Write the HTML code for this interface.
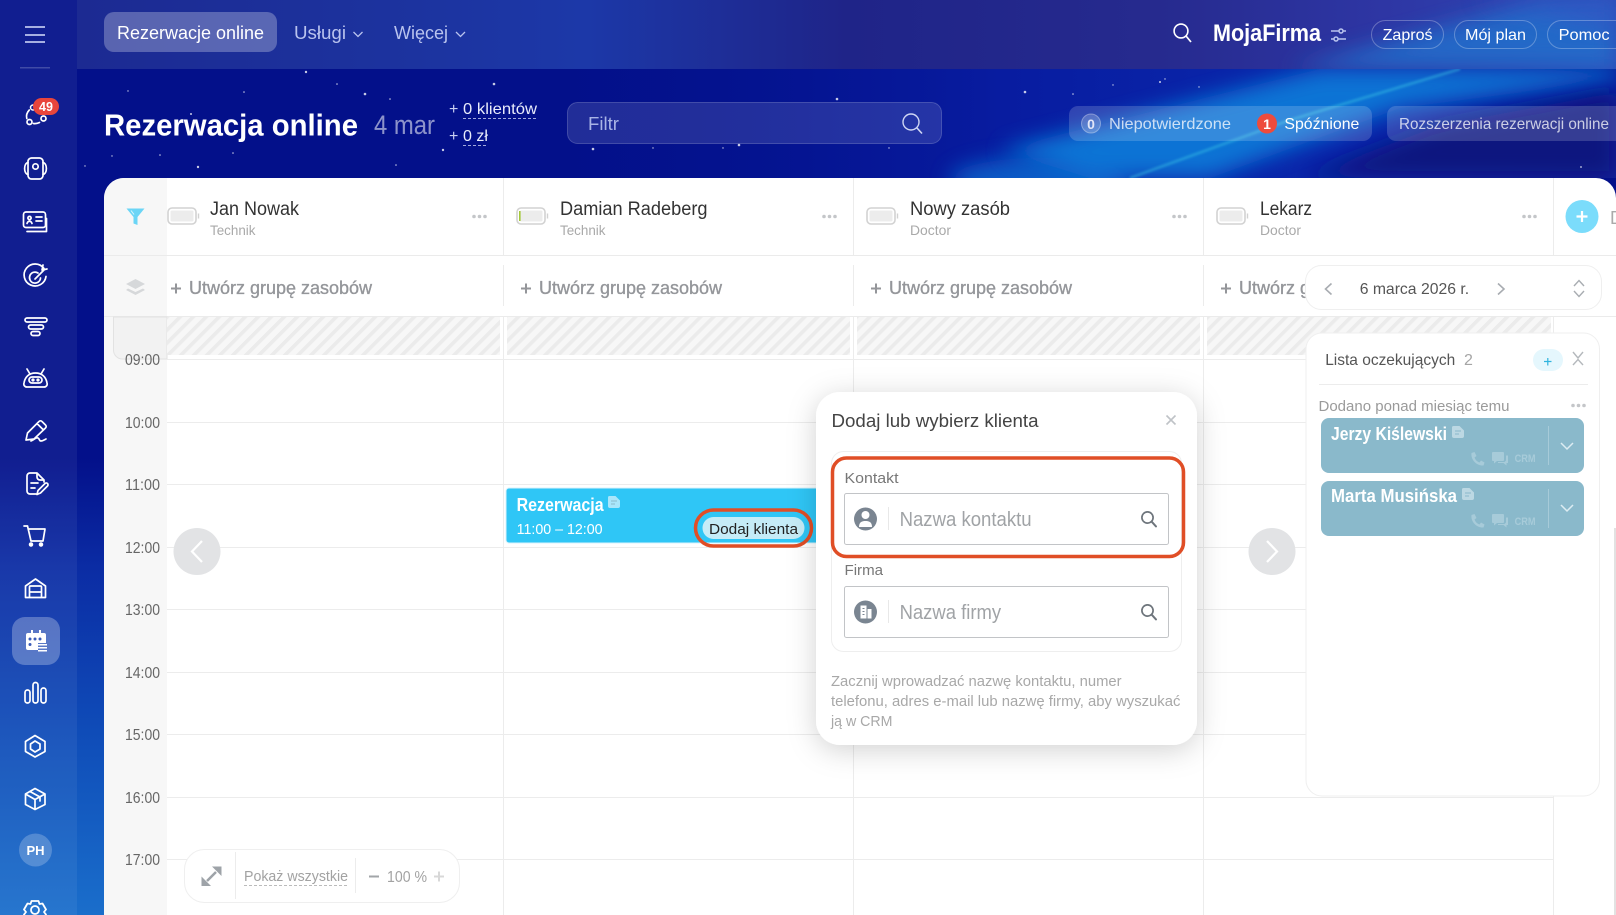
<!DOCTYPE html>
<html lang="pl"><head><meta charset="utf-8"><title>Rezerwacja online</title>
<style>html,body{margin:0;padding:0;background:#fff;overflow:hidden;width:1616px;height:915px}svg{display:block}text{font-family:"Liberation Sans",sans-serif;white-space:pre}</style></head>
<body>
<svg xmlns="http://www.w3.org/2000/svg" width="1616" height="915" viewBox="0 0 1616 915">
<defs>
<linearGradient id="base" x1="0" y1="0" x2="0" y2="1"><stop offset="0" stop-color="#03108a"/><stop offset=".5" stop-color="#03108a"/><stop offset=".62" stop-color="#0b2ca4"/><stop offset=".8" stop-color="#0f4cb8"/><stop offset="1" stop-color="#1a6ecb"/></linearGradient>
<linearGradient id="hz" x1="0" y1="0" x2="1" y2="0"><stop offset="0" stop-color="#03108a" stop-opacity="0"/><stop offset=".45" stop-color="#081ca0"/><stop offset=".75" stop-color="#0a28ac"/><stop offset="1" stop-color="#0a1e9c"/></linearGradient>
<linearGradient id="hdr" x1="0" y1="0" x2="1" y2="0"><stop offset="0" stop-color="#1c2a92"/><stop offset=".22" stop-color="#1c339f"/><stop offset=".33" stop-color="#1c38a8"/><stop offset=".5" stop-color="#1f2488"/><stop offset=".7" stop-color="#262a8e"/><stop offset=".85" stop-color="#2e36a4"/><stop offset="1" stop-color="#2f4ab8"/></linearGradient>
<filter id="b30" x="-30%" y="-100%" width="160%" height="300%"><feGaussianBlur stdDeviation="22"/></filter>
<filter id="b12" x="-20%" y="-50%" width="140%" height="200%"><feGaussianBlur stdDeviation="11"/></filter>
<filter id="b4" x="-10%" y="-30%" width="120%" height="160%"><feGaussianBlur stdDeviation="1.200"/></filter>
<filter id="sh" x="-20%" y="-20%" width="140%" height="140%"><feDropShadow dx="0" dy="5" stdDeviation="14" flood-color="#000" flood-opacity=".18"/></filter>
<clipPath id="bgclip"><rect x="77" y="69" width="1539" height="109"/></clipPath>
<clipPath id="hdclip"><rect x="77" y="0" width="1539" height="69"/></clipPath>
<clipPath id="card"><path d="M124 178H1596a20 20 0 0 1 20 20V915H104V198a20 20 0 0 1 20-20Z"/></clipPath>
<pattern id="hatch" width="9.200" height="9.200" patternUnits="userSpaceOnUse" patternTransform="rotate(45)"><rect width="9.200" height="9.200" fill="#f7f7f7"/><rect width="3.600" height="9.200" fill="#ebebeb"/></pattern>
<symbol id="bat" viewBox="0 0 34 18" width="34" height="18"><rect x="1" y="1" width="28" height="16" rx="4" fill="#fff" stroke="#d2d2d2" stroke-width="1.600"/><rect x="3.500" y="3.500" width="23" height="11" rx="1.500" fill="#ececec"/><path d="M31.500 6.500v5" stroke="#d2d2d2" stroke-width="1.400"/></symbol>
<symbol id="dots" viewBox="0 0 15 5" width="15" height="5"><circle cx="2" cy="2.500" r="1.800" fill="#c4c6c9"/><circle cx="7.500" cy="2.500" r="1.800" fill="#c4c6c9"/><circle cx="13" cy="2.500" r="1.800" fill="#c4c6c9"/></symbol>
<symbol id="mag" viewBox="0 0 18 18" width="18" height="18"><circle cx="7.500" cy="7.500" r="5.600" fill="none" stroke="#6e757c" stroke-width="1.700"/><path d="M11.600 11.600 16 16.400" stroke="#6e757c" stroke-width="2" stroke-linecap="round"/></symbol>
<symbol id="note" viewBox="0 0 12 12" width="12" height="12"><path d="M1.500 0h6L12 4.500V10a2 2 0 0 1-2 2H2a2 2 0 0 1-2-2V1.500A1.500 1.500 0 0 1 1.500 0Z" fill="currentColor"/><path d="M3 5h6M3 8h4" stroke="#8ab9cb" stroke-width="1"/></symbol>
<symbol id="phone" viewBox="0 0 48 14" width="48" height="14"><path d="M1.500 1 4.500 0 6.500 4 4.500 5.500C5.500 8 7 9.500 9.500 10.500L11 8.500 14.500 10.500 13.500 13.500C7 14 0.500 8 1.500 1Z" fill="#a7cbd9"/><path d="M23 0H33a1 1 0 0 1 1 1V8a1 1 0 0 1-1 1H27L24 11.500V9H23A1 1 0 0 1 22 8V1A1 1 0 0 1 23 0Z" fill="#a7cbd9"/><path d="M36 3.500H38V11H36.500V13.500L33.500 11H28V10H34.500L36 8.500Z" fill="#a7cbd9"/></symbol>
</defs>

<!-- background -->
<rect width="1616" height="915" fill="url(#base)"/>
<g clip-path="url(#bgclip)">
<rect x="500" y="69" width="1116" height="109" fill="url(#hz)"/>
<ellipse cx="1040" cy="180" rx="90" ry="22" fill="#0f6cd0" opacity=".8" filter="url(#b12)"/>
<path d="M1000 150 1320 69H1616V80L1400 108 1210 178H1090Z" fill="#1078d8" opacity=".95" filter="url(#b12)"/>
<path d="M1300 178 1440 125 1616 92V178Z" fill="#07187f" filter="url(#b12)"/>
<path d="M1130 178 1290 120 1460 69" stroke="#3fd0e8" stroke-width="2" fill="none" opacity=".55" filter="url(#b4)"/>
<g fill="#ffffff" opacity=".78">
<circle cx="306" cy="72" r="1.200"/><circle cx="365" cy="94" r="1.300"/><circle cx="390" cy="99" r=".8"/><circle cx="494" cy="84" r="1.300"/><circle cx="244" cy="92" r=".8"/><circle cx="191" cy="114" r="1"/><circle cx="160" cy="155" r=".8"/><circle cx="198" cy="167" r="1.200"/><circle cx="233" cy="153" r=".8"/><circle cx="443" cy="150" r="1.200"/><circle cx="396" cy="165" r=".8"/><circle cx="337" cy="84" r=".8"/><circle cx="112" cy="156" r=".7"/><circle cx="85" cy="166" r=".7"/><circle cx="128" cy="91" r=".7"/><circle cx="837" cy="99" r="1.300"/><circle cx="1025" cy="92" r="1.300"/><circle cx="1073" cy="94" r=".8"/><circle cx="593" cy="149" r="1.300"/><circle cx="739" cy="145" r="1.300"/><circle cx="653" cy="148" r=".7"/><circle cx="723" cy="148" r=".7"/><circle cx="889" cy="148" r=".7"/><circle cx="1160" cy="82" r="1"/><circle cx="1165" cy="79" r=".7"/><circle cx="1199" cy="87" r=".7"/><circle cx="1113" cy="85" r=".7"/><circle cx="1581" cy="167" r=".9"/></g>
</g>
<!-- sidebar & header overlays -->
<rect x="0" y="0" width="77" height="915" fill="#fff" opacity=".06"/>
<rect x="77" y="0" width="1539" height="69" fill="url(#hdr)"/>
<g clip-path="url(#hdclip)">
<path d="M1290 69 1540 0H1616V69Z" fill="#2470cc" opacity=".85" filter="url(#b12)"/>
<path d="M1470 0H1616V30L1530 10Z" fill="#3a48c0" opacity=".5" filter="url(#b12)"/>
</g>

<!-- top nav -->
<path d="M25 27h20M25 35h20M25 42h20" stroke="#bcc4ee" stroke-width="1.700" fill="none"/>
<rect x="20" y="67" width="30" height="1.500" fill="#fff" opacity=".2"/>
<rect x="104" y="12" width="173" height="40" rx="10" fill="#fff" opacity=".27"/>
<text x="117" y="39" font-size="18" fill="#fff" textLength="147" lengthAdjust="spacingAndGlyphs">Rezerwacje online</text>
<text x="294" y="39" font-size="18" fill="#b9c3ee" textLength="52" lengthAdjust="spacingAndGlyphs">Usługi</text>
<path d="M353.500 32l4.500 4.500 4.500-4.500" stroke="#b9c3ee" stroke-width="1.300" fill="none"/>
<text x="394" y="39" font-size="18" fill="#b9c3ee" textLength="54" lengthAdjust="spacingAndGlyphs">Więcej</text>
<path d="M456 32l4.500 4.500 4.500-4.500" stroke="#b9c3ee" stroke-width="1.300" fill="none"/>
<circle cx="1181" cy="31" r="6.900" fill="none" stroke="#fff" stroke-width="1.600"/><path d="M1186 36l5 6" stroke="#fff" stroke-width="1.700"/>
<text x="1213" y="41" font-size="24" font-weight="700" fill="#fff" textLength="108" lengthAdjust="spacingAndGlyphs">MojaFirma</text>
<g stroke="#b9c3ee" stroke-width="1.500" fill="none"><path d="M1331 31h15M1331 39h15"/><circle cx="1341" cy="31" r="2" fill="#2a3a9e"/><circle cx="1336" cy="39" r="2" fill="#2a3a9e"/></g>
<g fill="none" stroke="#fff" stroke-opacity=".28"><rect x="1371.500" y="20.500" width="72" height="28" rx="14"/><rect x="1454.500" y="20.500" width="82" height="28" rx="14"/><rect x="1547.500" y="20.500" width="92" height="28" rx="14"/></g>
<text x="1382.600" y="40" font-size="16" fill="#fff" textLength="50" lengthAdjust="spacingAndGlyphs">Zaproś</text>
<text x="1465" y="40" font-size="16" fill="#fff" textLength="61" lengthAdjust="spacingAndGlyphs">Mój plan</text>
<text x="1558.600" y="40" font-size="16" fill="#fff" textLength="51" lengthAdjust="spacingAndGlyphs">Pomoc</text>

<!-- page title -->
<text x="104" y="135.500" font-size="31" font-weight="700" fill="#fff" textLength="254" lengthAdjust="spacingAndGlyphs">Rezerwacja online</text>
<text x="374" y="134" font-size="27" fill="#fff" fill-opacity=".55" textLength="61" lengthAdjust="spacingAndGlyphs">4 mar</text>
<text x="449" y="114" font-size="16" fill="#c9cff2">+</text><text x="463" y="114" font-size="16" fill="#e9ecfb" textLength="74" lengthAdjust="spacingAndGlyphs">0 klientów</text>
<path d="M463 118.500h74" stroke="#c9cff2" stroke-dasharray="3 2" opacity=".8"/>
<text x="449" y="141" font-size="16" fill="#c9cff2">+</text><text x="463" y="141" font-size="16" fill="#e9ecfb" textLength="25" lengthAdjust="spacingAndGlyphs">0 zł</text>
<path d="M463 145.500h25" stroke="#c9cff2" stroke-dasharray="3 2" opacity=".8"/>
<rect x="567.500" y="102.500" width="374" height="41" rx="10" fill="#fff" fill-opacity=".12" stroke="#fff" stroke-opacity=".2"/>
<text x="588" y="130" font-size="18" fill="#a9b4e6" textLength="31" lengthAdjust="spacingAndGlyphs">Filtr</text>
<circle cx="911" cy="122" r="8" fill="none" stroke="#cfd6f4" stroke-width="1.400"/><path d="M917 128l5 5.500" stroke="#cfd6f4" stroke-width="1.600"/>
<rect x="1069" y="106" width="303" height="35" rx="9" fill="#fff" fill-opacity=".17"/>
<circle cx="1091" cy="123.500" r="9.500" fill="#fff" fill-opacity=".2" stroke="#fff" stroke-opacity=".35"/>
<text x="1091" y="129" font-size="14" font-weight="700" fill="#e2e6f8" text-anchor="middle">0</text>
<text x="1109" y="129" font-size="16" fill="#fff" fill-opacity=".75" textLength="122" lengthAdjust="spacingAndGlyphs">Niepotwierdzone</text>
<circle cx="1267" cy="123.500" r="10" fill="#ee4b3c"/>
<text x="1267" y="129" font-size="14" font-weight="700" fill="#fff" text-anchor="middle">1</text>
<text x="1284.400" y="129" font-size="16" fill="#fff" textLength="75" lengthAdjust="spacingAndGlyphs">Spóźnione</text>
<path d="M1396 106H1616V141H1396a9 9 0 0 1-9-9V115a9 9 0 0 1 9-9Z" fill="#fff" fill-opacity=".17"/>
<text x="1399" y="129" font-size="16" fill="#fff" fill-opacity=".75" textLength="210" lengthAdjust="spacingAndGlyphs">Rozszerzenia rezerwacji online</text>

<!-- sidebar icons -->
<g fill="none" stroke="#fff" stroke-width="1.700" stroke-linecap="round" stroke-linejoin="round">
<circle cx="29.500" cy="122" r="2.500"/><circle cx="43.500" cy="118.500" r="2.500"/><path d="M26.800 118.500c-.8-3 .2-6 2.500-8.500M33.500 123.500c2 .3 4 0 6-1"/><circle cx="33" cy="107.500" r="2.500" stroke-width="1.500"/>
<rect x="28" y="158" width="15" height="21" rx="3.500"/><circle cx="35.500" cy="166.500" r="2.700"/><path d="M28 162.500c-4.500 1-4.500 11 0 12M43 162.500c4.500 1 4.500 11 0 12"/>
<rect x="23.500" y="212" width="22" height="15.500" rx="2.500"/><path d="M27 231.500h19.500v-13"/><circle cx="29.500" cy="218" r="1.600"/><path d="M27 223.500c1-3 4-3 5 0M36 217h6M36 221h6"/>
<path d="M44 268.500a11 11 0 1 0 2 8M38 273a5.500 5.500 0 1 0 2.500 5M35 279 44 270M43 265l-1 5 5-1" />
<rect x="25" y="318" width="22" height="4" rx="2"/><rect x="28.500" y="325" width="15" height="4" rx="2"/><rect x="31" y="331.500" width="9" height="4" rx="2"/>
<path d="M27 387h17a3 3 0 0 0 3-4c-1-6-5-10-11.500-10s-10.500 4-11.500 10a3 3 0 0 0 3 4ZM30 374l-3-5M41 374l3-5"/><rect x="29" y="377" width="13" height="6" rx="3"/><circle cx="33" cy="380" r=".8" fill="#fff"/><circle cx="38" cy="380" r=".8" fill="#fff"/>
<path d="M26 440l1.500-7L39 421.500a2 2 0 0 1 3 0l3.500 3.500a2 2 0 0 1 0 3L34 439ZM37 423.500l6.500 6.500M31 441c3-1 5-4 7-3s1 3 3 3 3-1 5-2"/>
<path d="M36 494H30a3 3 0 0 1-3-3V476a3 3 0 0 1 3-3H37L44 480V482M37 473v4a3 3 0 0 0 3 3h4M31 483h7M31 488h4M37 494.500l1-4 7-7a1.500 1.500 0 0 1 2.500 2.500l-7 7Z"/>
<path d="M24 526h3.500l3.500 15H43l2-12H28.500"/><circle cx="31" cy="544.500" r="1.400" fill="#fff"/><circle cx="41" cy="544.500" r="1.400" fill="#fff"/>
<path d="M25.500 597.500V586l10-7 10 7v11.500ZM29.500 597.500V587a1 1 0 0 1 1-1h10a1 1 0 0 1 1 1v10.500M29.500 592h12"/>
</g>
<rect x="12" y="617" width="48" height="48" rx="13" fill="#fff" fill-opacity=".27"/>
<g fill="#fff"><path d="M28 633h3v-3h2v3h6v-3h2v3h3a2 2 0 0 1 2 2v8h-8v7H28a2 2 0 0 1-2-2V635a2 2 0 0 1 2-2Z"/><rect x="38" y="644" width="9" height="1.500"/><rect x="38" y="647" width="9" height="1.500"/><rect x="38" y="650" width="9" height="1.500"/></g>
<g fill="#3a5bb8"><circle cx="30" cy="639" r="1.500"/><circle cx="35" cy="639" r="1.500"/><circle cx="40" cy="639" r="1.500"/><circle cx="30" cy="644.500" r="1.500"/></g>
<g fill="none" stroke="#fff" stroke-width="1.700" stroke-linecap="round" stroke-linejoin="round">
<rect x="25" y="690" width="5" height="13" rx="2.500"/><rect x="33" y="682.500" width="5" height="20.500" rx="2.500"/><rect x="41" y="688" width="5" height="15" rx="2.500"/>
<path d="M35 735.500 45 741.500V751.500L35 757 25.500 751.500V741.500ZM35 741 40 744V749L35 752 30.500 749V744Z"/>
<path d="M35 788.500 45 794V804.500L35 809.500 25.500 804.500V794ZM25.500 794 35 799.500 45 794M35 799.500V809.500M30 791.500 40 797V801"/>
</g>
<circle cx="35.500" cy="850" r="16.500" fill="#fff" fill-opacity=".22"/>
<text x="35.500" y="855" font-size="13" font-weight="700" fill="#fff" text-anchor="middle">PH</text>
<g fill="none" stroke="#fff" stroke-width="1.800" stroke-linejoin="round"><circle cx="35" cy="910" r="4"/><path d="M31.500 901h7l1 3 3-.5 3.500 6-2 2.500 2 2.500-3.500 6-3-.5-1 3h-7l-1-3-3 .5-3.500-6 2-2.500-2-2.500 3.500-6 3 .5Z"/></g>
<!-- badge -->
<rect x="33" y="98" width="26" height="17" rx="8.500" fill="#e8453c"/>
<text x="46" y="111" font-size="12.500" font-weight="700" fill="#fff" text-anchor="middle">49</text>

<!-- main card -->
<g clip-path="url(#card)">
<rect x="104" y="178" width="1512" height="737" fill="#fff"/>
<rect x="104" y="178" width="63" height="737" fill="#f7f7f7"/>
<!-- row lines -->
<path d="M104 255.500H1616" stroke="#ebebeb"/>
<path d="M104 316.500H1616" stroke="#ebebeb"/>
<!-- hatched rows -->
<path d="M113.500 317V350a9 9 0 0 0 9 9H167V317Z" fill="#f2f2f2" stroke="#e2e2e2"/>
<rect x="167" y="317" width="333" height="38" fill="url(#hatch)"/>
<rect x="507" y="317" width="343" height="38" fill="url(#hatch)"/>
<rect x="857" y="317" width="343" height="38" fill="url(#hatch)"/>
<rect x="1207" y="317" width="344" height="38" fill="url(#hatch)"/>
<!-- time lines -->
<g stroke="#ececec"><path d="M167 359.500H1553M167 422.500H1553M167 484.500H1553M167 547.500H1553M167 609.500H1553M167 672.500H1553M167 734.500H1553M167 797.500H1553M167 859.500H1553"/>
<path d="M503.500 178V255M853.500 178V255M1203.500 178V255M1553.500 178V255M503.500 265V306M853.500 265V306M1203.500 265V306M503.500 317V915M853.500 317V915M1203.500 317V915M1553.500 317V915"/></g>
<g font-size="16" fill="#666" text-anchor="end"><text x="160" y="365" textLength="35" lengthAdjust="spacingAndGlyphs">09:00</text><text x="160" y="428" textLength="35" lengthAdjust="spacingAndGlyphs">10:00</text><text x="160" y="490" textLength="35" lengthAdjust="spacingAndGlyphs">11:00</text><text x="160" y="553" textLength="35" lengthAdjust="spacingAndGlyphs">12:00</text><text x="160" y="615" textLength="35" lengthAdjust="spacingAndGlyphs">13:00</text><text x="160" y="678" textLength="35" lengthAdjust="spacingAndGlyphs">14:00</text><text x="160" y="740" textLength="35" lengthAdjust="spacingAndGlyphs">15:00</text><text x="160" y="803" textLength="35" lengthAdjust="spacingAndGlyphs">16:00</text><text x="160" y="865" textLength="35" lengthAdjust="spacingAndGlyphs">17:00</text></g>
<!-- filter & layers -->
<path d="M126.500 208.500H144.500L137.500 217V225L133.500 223.500V217Z" fill="#6bd5f6"/><path d="M131 210.500l3 4" stroke="#d8f5fd" stroke-width="1"/>
<path d="M135.500 279 145 284 135.500 289 126 284Z" fill="#d6d8da"/><path d="M128 288.500 135.500 292 143 288.500 145 290 135.500 295 126 290Z" fill="#d6d8da"/>
<!-- resources -->
<use href="#bat" x="167" y="207"/><use href="#bat" x="516" y="207"/><use href="#bat" x="866" y="207"/><use href="#bat" x="1216" y="207"/>
<rect x="519" y="211" width="1.600" height="10" fill="#a4c838"/>
<g font-size="19" fill="#333"><text x="210" y="215" textLength="89" lengthAdjust="spacingAndGlyphs">Jan Nowak</text><text x="560" y="215" textLength="147.500" lengthAdjust="spacingAndGlyphs">Damian Radeberg</text><text x="910" y="215" textLength="100" lengthAdjust="spacingAndGlyphs">Nowy zasób</text><text x="1260" y="215" textLength="52" lengthAdjust="spacingAndGlyphs">Lekarz</text></g>
<g font-size="14" fill="#a9a9a9"><text x="210" y="235" textLength="45.500" lengthAdjust="spacingAndGlyphs">Technik</text><text x="560" y="235" textLength="45.500" lengthAdjust="spacingAndGlyphs">Technik</text><text x="910" y="235" textLength="41" lengthAdjust="spacingAndGlyphs">Doctor</text><text x="1260" y="235" textLength="41" lengthAdjust="spacingAndGlyphs">Doctor</text></g>
<use href="#dots" x="472" y="214"/><use href="#dots" x="822" y="214"/><use href="#dots" x="1172" y="214"/><use href="#dots" x="1522" y="214"/>
<circle cx="1582" cy="216.500" r="16.500" fill="#7bdcfb"/><path d="M1576.500 216.500h11M1582 211v11" stroke="#fff" stroke-width="2.200"/>
<text x="1610" y="224" font-size="18" fill="#aaa">D</text>
<g font-size="18" fill="#94969a" stroke="#94969a" stroke-width=".35">
<text x="189" y="294" textLength="183" lengthAdjust="spacingAndGlyphs">Utwórz grupę zasobów</text>
<text x="539" y="294" textLength="183" lengthAdjust="spacingAndGlyphs">Utwórz grupę zasobów</text>
<text x="889" y="294" textLength="183" lengthAdjust="spacingAndGlyphs">Utwórz grupę zasobów</text>
<text x="1239" y="294" textLength="183" lengthAdjust="spacingAndGlyphs">Utwórz grupę zasobów</text></g>
<path d="M171 288.500h10M176 283.500v10M521 288.500h10M526 283.500v10M871 288.500h10M876 283.500v10M1221 288.500h10M1226 283.500v10" stroke="#94969a" stroke-width="2"/>
<!-- date pill -->
<rect x="1305.500" y="265.500" width="296" height="44" rx="16" fill="#fff" stroke="#efefef"/>
<path d="M1331.500 283.500l-6 5.500 6 5.500M1498 283.500l6 5.500-6 5.500" fill="none" stroke="#a8acb1" stroke-width="1.600"/>
<text x="1359.700" y="294" font-size="16" fill="#555" textLength="109.400" lengthAdjust="spacingAndGlyphs">6 marca 2026 r.</text>
<path d="M1574 286l5-5.500 5 5.500M1574 291l5 5.500 5-5.500" fill="none" stroke="#a8acb1" stroke-width="1.400"/>
<!-- nav circles -->
<circle cx="197" cy="551.500" r="23.500" fill="#e2e3e5"/><path d="M202 541l-10 10.500 10 10.500" fill="none" stroke="#fff" stroke-width="2.200"/>
<circle cx="1272" cy="551.500" r="23.500" fill="#e2e3e5"/><path d="M1267 541l10 10.500-10 10.500" fill="none" stroke="#fff" stroke-width="2.200"/>
<!-- event -->
<rect x="506" y="488" width="320" height="55" rx="3" fill="#2fc6f6" stroke="#d8f3fc"/>
<text x="516.600" y="511" font-size="18" font-weight="700" fill="#fff" textLength="87" lengthAdjust="spacingAndGlyphs">Rezerwacja</text>
<use href="#note" x="608" y="496" style="color:#a9e6fb"/>
<text x="516.600" y="534" font-size="15" fill="#fff" textLength="86" lengthAdjust="spacingAndGlyphs">11:00 – 12:00</text>
<rect x="702.500" y="517" width="102" height="22" rx="11" fill="#c5ecf7"/>
<text x="709" y="534" font-size="15" fill="#222" textLength="89" lengthAdjust="spacingAndGlyphs">Dodaj klienta</text>
<rect x="695.500" y="510" width="116" height="36" rx="18" fill="none" stroke="#e04e26" stroke-width="3.500"/>
<!-- toolbar -->
<rect x="184.500" y="849.500" width="275" height="53" rx="20" fill="#fff" stroke="#efefef"/>
<path d="M235.500 852V899M355.500 858V893" stroke="#ececec"/>
<path d="M212 866.500h9.500V876ZM201.500 876.500V886H211Z" fill="#9ea3a8"/><path d="M216 872l-4.500 4.500M207 881l4.500-4.500" stroke="#9ea3a8" stroke-width="2.500"/>
<text x="244" y="881" font-size="15" fill="#a2a2a2" textLength="104" lengthAdjust="spacingAndGlyphs">Pokaż wszystkie</text>
<path d="M244 885.500h104" stroke="#bbb" stroke-dasharray="3 2"/>
<path d="M369 876.500h10" stroke="#a2a5a8" stroke-width="2"/>
<text x="387" y="882" font-size="16" fill="#a2a2a2" textLength="40" lengthAdjust="spacingAndGlyphs">100 %</text>
<path d="M434 876.500h10M439 871.500v10" stroke="#d8d8d8" stroke-width="2"/>
<!-- waitlist -->
<rect x="1306" y="333" width="293.500" height="463" rx="16" fill="#fff" stroke="#efefef"/>
<text x="1325.200" y="365" font-size="16" fill="#555" textLength="130" lengthAdjust="spacingAndGlyphs">Lista oczekujących</text>
<text x="1464" y="365" font-size="16" fill="#a5a5a5">2</text>
<rect x="1533" y="349" width="30" height="22" rx="11" fill="#e5f7fd"/><path d="M1544 361.500h7.500M1547.800 358v7.500" stroke="#2fb4de" stroke-width="1.200"/>
<path d="M1573 352l5 6 5-6M1573 365l5-5.500 5 5.500" fill="none" stroke="#b4b8bc" stroke-width="1.400"/>
<path d="M1319 384.500h269" stroke="#ececec"/>
<text x="1318.500" y="411" font-size="15" fill="#9a9a9a" textLength="191" lengthAdjust="spacingAndGlyphs">Dodano ponad miesiąc temu</text>
<use href="#dots" x="1571" y="403"/>
<rect x="1321" y="418" width="263" height="55" rx="8" fill="#8ab9cb"/>
<rect x="1321" y="481" width="263" height="55" rx="8" fill="#8ab9cb"/>
<text x="1331" y="440" font-size="18" font-weight="700" fill="#fff" textLength="116" lengthAdjust="spacingAndGlyphs">Jerzy Kiślewski</text>
<text x="1331" y="502" font-size="18" font-weight="700" fill="#fff" textLength="126" lengthAdjust="spacingAndGlyphs">Marta Musińska</text>
<use href="#note" x="1452" y="426" style="color:#bcd8e3"/><use href="#note" x="1462" y="488" style="color:#bcd8e3"/>
<use href="#phone" x="1470" y="452"/><use href="#phone" x="1470" y="514"/>
<text x="1514.600" y="462" font-size="11" font-weight="700" fill="#a7cbd9" textLength="21" lengthAdjust="spacingAndGlyphs">CRM</text>
<text x="1514.600" y="525" font-size="11" font-weight="700" fill="#a7cbd9" textLength="21" lengthAdjust="spacingAndGlyphs">CRM</text>
<path d="M1548.500 426V465M1548.500 489V528" stroke="#a7cbd9"/>
<path d="M1561 443l6 6 6-6M1561 505l6 6 6-6" fill="none" stroke="#dcecf2" stroke-width="1.500"/>
<rect x="1614" y="528" width="2" height="387" fill="#e2e2e2"/>
</g>

<!-- popup -->
<rect x="816" y="392" width="381" height="353" rx="24" fill="#fff" filter="url(#sh)"/>
<text x="831.500" y="427" font-size="18.500" fill="#444" textLength="207" lengthAdjust="spacingAndGlyphs">Dodaj lub wybierz klienta</text>
<path d="M1166.500 415.500l9 9M1175.500 415.500l-9 9" stroke="#bfc3c7" stroke-width="1.600"/>
<rect x="831.500" y="451.500" width="350" height="200" rx="12" fill="#fff" stroke="#eeeeee"/>
<text x="844.500" y="483" font-size="15" fill="#777" textLength="54" lengthAdjust="spacingAndGlyphs">Kontakt</text>
<rect x="844.500" y="493.500" width="324" height="51" rx="2" fill="#fff" stroke="#c2c4c7"/>
<circle cx="865.500" cy="519" r="11.500" fill="#7a8591"/>
<circle cx="865.500" cy="515" r="4" fill="#fff"/><path d="M859 527c0-5 3-6 6.500-6s6.500 1 6.500 6Z" fill="#fff"/>
<path d="M888.500 507V530" stroke="#e8e8e8"/>
<text x="899.600" y="526" font-size="20" fill="#a0a3a6" textLength="132" lengthAdjust="spacingAndGlyphs">Nazwa kontaktu</text>
<use href="#mag" x="1140" y="510"/>
<text x="844.500" y="575" font-size="15" fill="#777" textLength="38.500" lengthAdjust="spacingAndGlyphs">Firma</text>
<rect x="844.500" y="586.500" width="324" height="51" rx="2" fill="#fff" stroke="#c2c4c7"/>
<circle cx="865.500" cy="612" r="11.500" fill="#7a8591"/>
<path d="M860.500 605.500h6v13h-6ZM867.500 609h4v9.500h-4Z" fill="#fff"/><path d="M862.500 608.500h2M862.500 611.500h2M862.500 614.500h2" stroke="#7a8591"/>
<path d="M888.500 600V623" stroke="#e8e8e8"/>
<text x="899.600" y="619" font-size="20" fill="#a0a3a6" textLength="101.500" lengthAdjust="spacingAndGlyphs">Nazwa firmy</text>
<use href="#mag" x="1140" y="603"/>
<rect x="832.500" y="458" width="351" height="98.500" rx="14" fill="none" stroke="#e04e26" stroke-width="3.500"/>
<g font-size="14.500" fill="#a8a8a8">
<text x="831" y="686" textLength="290.600" lengthAdjust="spacingAndGlyphs">Zacznij wprowadzać nazwę kontaktu, numer</text>
<text x="831" y="706" textLength="349.400" lengthAdjust="spacingAndGlyphs">telefonu, adres e-mail lub nazwę firmy, aby wyszukać</text>
<text x="831" y="726" textLength="61.500" lengthAdjust="spacingAndGlyphs">ją w CRM</text></g>
</svg>
</body></html>
